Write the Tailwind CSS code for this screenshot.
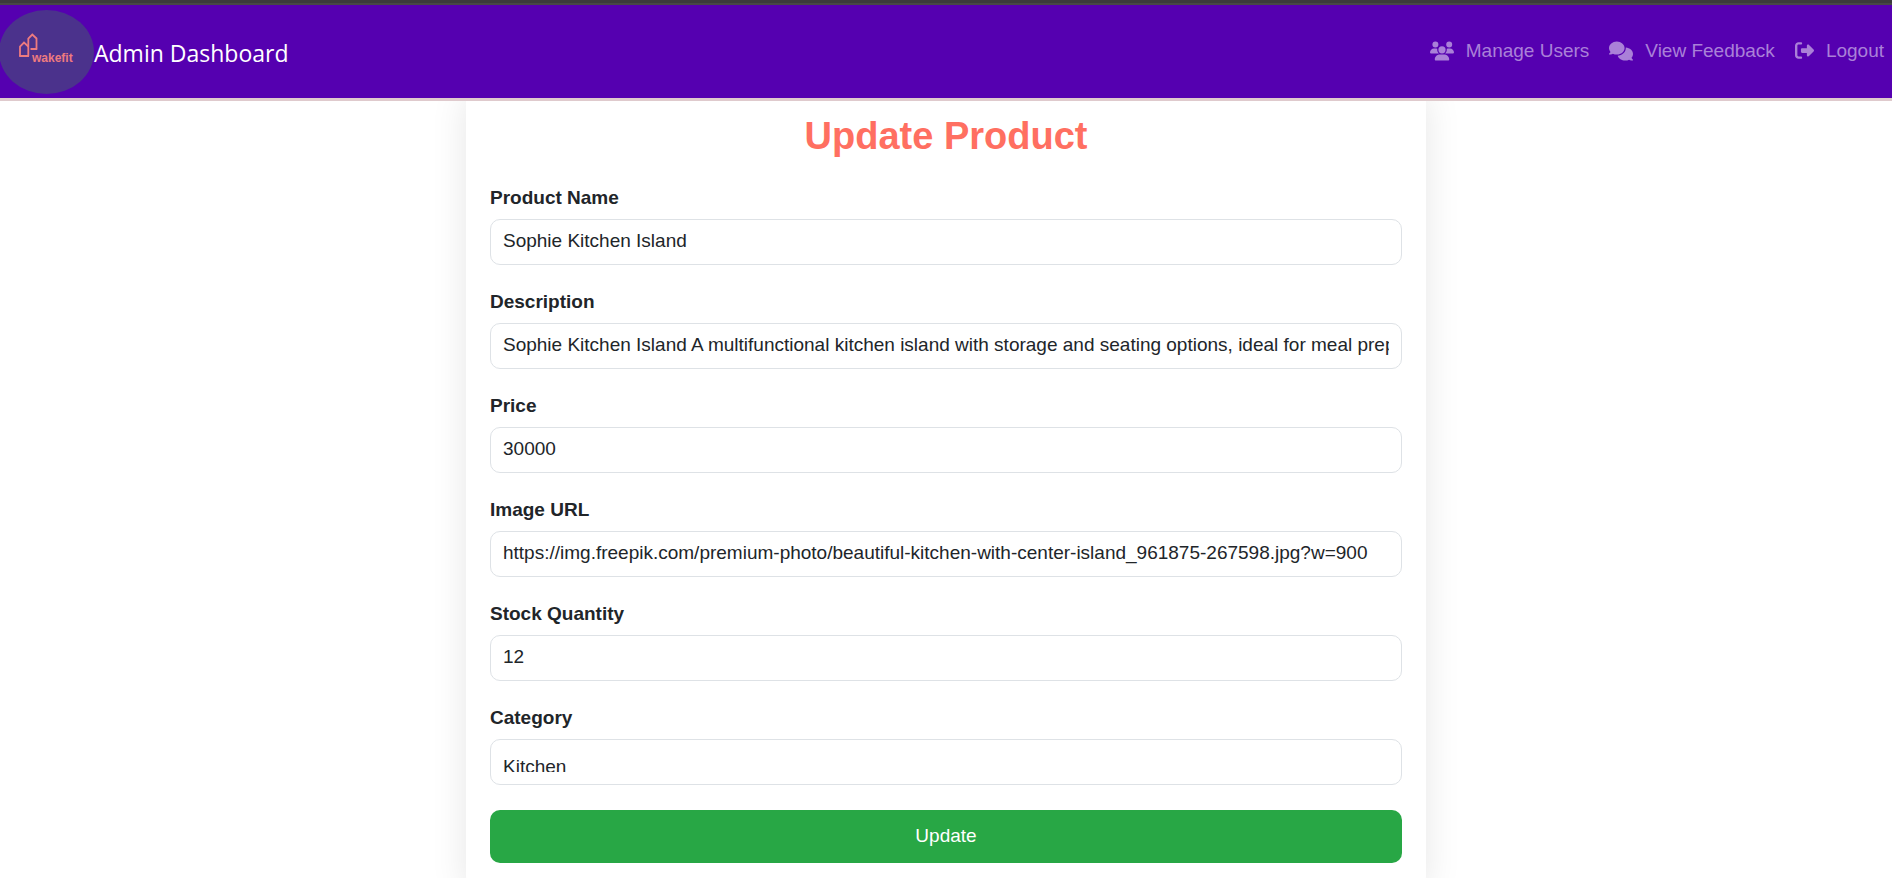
<!DOCTYPE html>
<html lang="en">
<head>
<meta charset="utf-8">
<meta name="viewport" content="width=device-width, initial-scale=1">
<title>Admin Dashboard - Update Product</title>
<script src="https://cdn.jsdelivr.net/npm/@tailwindcss/browser@4"></script>
</head>
<body class="bg-white font-['Liberation_Sans',Arial,sans-serif] text-[19px] text-[#212529]">
<header class="relative z-10 border-t-[3px] border-[#3b3b3b]">
  <div class="h-0.5 bg-[#474747]"></div>
  <nav class="flex h-24 items-center justify-between border-b-[3px] border-[#dfcacd] bg-[#5500b0]">
    <a href="#" class="flex items-center font-['Open_Sans',sans-serif] text-[23px] leading-9 text-white">
      <svg class="h-[84px] w-[94px]" viewBox="0 0 94 84" role="img" aria-label="wakefit">
        <ellipse cx="46.500" cy="42" rx="47.500" ry="42" fill="#4b328c"/>
        <g fill="none" stroke="#ee7b7f" stroke-width="1.800">
          <path d="M20 46.300V36.500L24 32.500L28.300 36.500"/>
          <path d="M28.300 46.300V28.500L32.300 24.500L36.500 28.500V38.500"/>
          <path d="M19.200 46H29M30.500 39H37.300" stroke-width="2.200"/>
        </g>
        <text x="32" y="51.500" fill="#ee7b7f" font-family="Liberation Sans, Arial, sans-serif" font-weight="700" font-size="12">wakefit</text>
      </svg>
      <span class="pt-0.5">Admin Dashboard</span>
    </a>
    <ul class="flex items-center gap-5 pr-2 pb-0.5 leading-7 text-[#aa80d8]">
      <li><a href="#" class="flex items-center gap-3">
        <svg class="h-5 w-6" viewBox="0 0 640 512" fill="currentColor" aria-hidden="true"><path d="M144 0a80 80 0 1 1 0 160A80 80 0 1 1 144 0zM512 0a80 80 0 1 1 0 160A80 80 0 1 1 512 0zM0 298.700C0 239.800 47.800 192 106.700 192l42.700 0c15.900 0 31 3.500 44.600 9.700c-1.300 7.200-1.900 14.700-1.900 22.300c0 38.200 16.800 72.500 43.300 96c-.2 0-.4 0-.7 0L21.300 320C9.600 320 0 310.400 0 298.700zM405.300 320c-.2 0-.4 0-.7 0c26.600-23.500 43.300-57.800 43.300-96c0-7.600-.7-15-1.900-22.300c13.600-6.300 28.700-9.700 44.600-9.700l42.700 0C592.200 192 640 239.800 640 298.700c0 11.800-9.600 21.300-21.300 21.300l-213.300 0zM224 224a96 96 0 1 1 192 0 96 96 0 1 1 -192 0zM128 485.300C128 411.700 187.700 352 261.300 352l117.300 0C452.300 352 512 411.700 512 485.300c0 14.700-11.900 26.700-26.700 26.700l-330.700 0c-14.700 0-26.700-11.900-26.700-26.700z"/></svg>
        <span>Manage Users</span></a></li>
      <li><a href="#" class="flex items-center gap-3">
        <svg class="h-5 w-6" viewBox="0 0 640 512" fill="currentColor" aria-hidden="true"><path d="M208 352c114.900 0 208-78.800 208-176S322.900 0 208 0S0 78.800 0 176c0 38.600 14.700 74.300 39.600 103.400c-3.500 9.400-8.700 17.700-14.200 24.700c-4.800 6.200-9.700 11-13.300 14.300c-1.800 1.600-3.300 2.900-4.300 3.700c-.5 .4-.9 .7-1.100 .8l-.2 .2C1 327.200-1.400 334.400 .8 340.900S9.100 352 16 352c21.800 0 43.800-5.600 62.100-12.500c9.200-3.500 17.800-7.400 25.200-11.400C134.100 343.300 169.800 352 208 352zM448 176c0 112.300-99.100 196.900-216.500 207C255.800 457.400 336.400 512 432 512c38.200 0 73.900-8.700 104.700-23.900c7.500 4 16 7.900 25.200 11.400c18.300 6.900 40.300 12.500 62.100 12.500c6.900 0 13.100-4.500 15.200-11.100c2.100-6.600-.2-13.800-5.800-17.900l-.2-.2c-.2-.2-.6-.4-1.100-.8c-1-.8-2.500-2-4.300-3.700c-3.600-3.300-8.500-8.100-13.300-14.300c-5.500-7-10.700-15.400-14.200-24.700c24.900-29 39.600-64.700 39.600-103.400c0-92.800-84.900-168.900-192.600-175.500c.4 5.100 .6 10.300 .6 15.500z"/></svg>
        <span>View Feedback</span></a></li>
      <li><a href="#" class="flex items-center gap-3">
        <svg class="size-[19px]" viewBox="0 0 512 512" fill="currentColor" aria-hidden="true"><path d="M377.900 105.900L500.700 228.700c7.200 7.200 11.300 17.100 11.300 27.300s-4.100 20.100-11.300 27.300L377.900 406.100c-6.400 6.400-15 9.900-24 9.900c-18.700 0-33.900-15.200-33.900-33.900l0-62.100-128 0c-17.700 0-32-14.300-32-32l0-64c0-17.700 14.300-32 32-32l128 0 0-62.100c0-18.700 15.200-33.900 33.900-33.900c9 0 17.600 3.600 24 9.900zM160 96L96 96c-17.700 0-32 14.300-32 32l0 256c0 17.700 14.300 32 32 32l64 0c17.700 0 32 14.300 32 32s-14.300 32-32 32l-64 0c-53 0-96-43-96-96L0 128C0 75 43 32 96 32l64 0c17.700 0 32 14.300 32 32s-14.300 32-32 32z"/></svg>
        <span>Logout</span></a></li>
    </ul>
  </nav>
</header>

<main class="mx-auto -mt-3 max-w-[960px] rounded-[10px] bg-white p-6 shadow-[0_5px_36px_rgba(0,0,0,0.1)]">
  <h1 class="mb-[27px] text-center text-[38px] leading-[46px] font-bold text-[#ff6f61]">Update Product</h1>
  <form class="flex flex-col gap-[25px]">
    <div class="flex flex-col gap-[9px]">
      <label for="name" class="leading-6 font-bold">Product Name</label>
      <input id="name" type="text" value="Sophie Kitchen Island" class="h-[46px] w-full rounded-[10px] border border-[#dee2e6] px-3 pb-0.5">
    </div>
    <div class="flex flex-col gap-[9px]">
      <label for="description" class="leading-6 font-bold">Description</label>
      <input id="description" type="text" value="Sophie Kitchen Island A multifunctional kitchen island with storage and seating options, ideal for meal preparation and dining." class="h-[46px] w-full rounded-[10px] border border-[#dee2e6] px-3 pb-0.5">
    </div>
    <div class="flex flex-col gap-[9px]">
      <label for="price" class="leading-6 font-bold">Price</label>
      <input id="price" type="text" inputmode="numeric" value="30000" class="h-[46px] w-full rounded-[10px] border border-[#dee2e6] px-3 pb-0.5">
    </div>
    <div class="flex flex-col gap-[9px]">
      <label for="image" class="leading-6 font-bold">Image URL</label>
      <input id="image" type="text" value="https://img.freepik.com/premium-photo/beautiful-kitchen-with-center-island_961875-267598.jpg?w=900" class="h-[46px] w-full rounded-[10px] border border-[#dee2e6] px-3 pb-0.5">
    </div>
    <div class="flex flex-col gap-[9px]">
      <label for="stock" class="leading-6 font-bold">Stock Quantity</label>
      <input id="stock" type="text" inputmode="numeric" value="12" class="h-[46px] w-full rounded-[10px] border border-[#dee2e6] px-3 pb-0.5">
    </div>
    <div class="flex flex-col gap-[9px]">
      <label for="category" class="leading-6 font-bold">Category</label>
      <select id="category" class="h-[46px] w-full appearance-none rounded-[10px] border border-[#dee2e6] bg-white p-3 leading-[30px]">
        <option selected>Kitchen</option>
      </select>
    </div>
    <button type="submit" class="h-[53px] rounded-[10px] bg-[#28a745] text-white">Update</button>
  </form>
</main>
</body>
</html>
